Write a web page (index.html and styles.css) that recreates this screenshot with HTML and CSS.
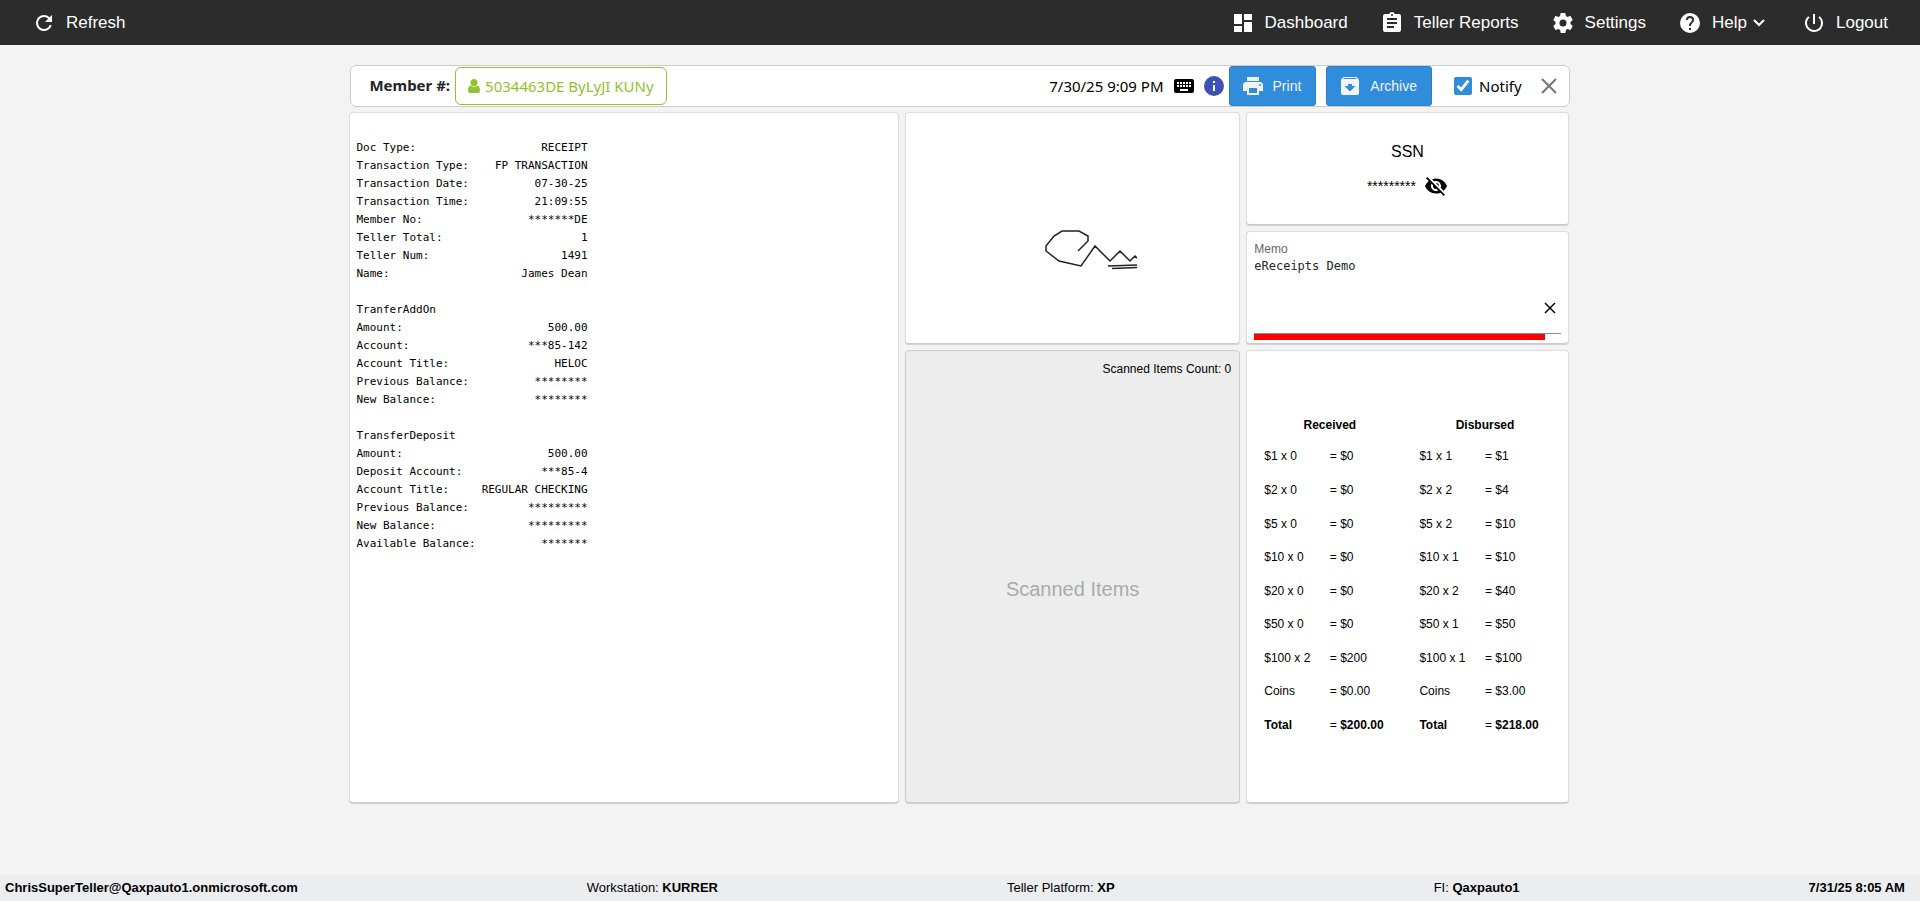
FILE: index.html
```html
<!DOCTYPE html>
<html lang="en">
<head>
  <meta charset="UTF-8">
  <title>Teller Receipt</title>
  <link rel="stylesheet" href="styles.css">
</head>
<body>

<header class="navbar">
  <a href="#" class="nav-link">
    <svg class="icon" viewBox="0 0 24 24"><path d="M17.65 6.35A7.96 7.96 0 0 0 12 4a8 8 0 1 0 7.73 10h-2.08A6 6 0 1 1 12 6c1.66 0 3.14.69 4.22 1.78L13 11h7V4z"/></svg>
    Refresh
  </a>
  <nav class="nav-right">
    <a href="#" class="nav-link">
      <svg class="icon" viewBox="0 0 24 24"><path d="M3 13h8V3H3v10zm0 8h8v-6H3v6zm10 0h8V11h-8v10zm0-18v6h8V3h-8z"/></svg>
      Dashboard
    </a>
    <a href="#" class="nav-link">
      <svg class="icon" viewBox="0 0 24 24"><path d="M19 3h-4.18C14.4 1.84 13.3 1 12 1s-2.4.84-2.82 2H5a2 2 0 0 0-2 2v14a2 2 0 0 0 2 2h14a2 2 0 0 0 2-2V5a2 2 0 0 0-2-2zm-7 0a1 1 0 1 1 0 2 1 1 0 0 1 0-2zm2 14H7v-2h7v2zm3-4H7v-2h10v2zm0-4H7V7h10v2z"/></svg>
      Teller Reports
    </a>
    <a href="#" class="nav-link">
      <svg class="icon" viewBox="0 0 24 24"><path d="M19.43 12.98c.04-.32.07-.64.07-.98s-.03-.66-.07-.98l2.11-1.65c.19-.15.24-.42.12-.64l-2-3.46c-.12-.22-.39-.3-.61-.22l-2.49 1c-.52-.4-1.08-.73-1.69-.98l-.38-2.65A.49.49 0 0 0 14 2h-4c-.25 0-.46.18-.49.42l-.38 2.65c-.61.25-1.17.59-1.69.98l-2.49-1c-.23-.09-.49 0-.61.22l-2 3.46c-.13.22-.07.49.12.64l2.11 1.65c-.04.32-.07.65-.07.98s.03.66.07.98l-2.11 1.65c-.19.15-.24.42-.12.64l2 3.46c.12.22.39.3.61.22l2.49-1c.52.4 1.08.73 1.69.98l.38 2.65c.03.24.24.42.49.42h4c.25 0 .46-.18.49-.42l.38-2.65c.61-.25 1.17-.59 1.69-.98l2.49 1c.23.09.49 0 .61-.22l2-3.46c.12-.22.07-.49-.12-.64l-2.11-1.65zM12 15.5a3.5 3.5 0 1 1 0-7 3.5 3.5 0 0 1 0 7z"/></svg>
      Settings
    </a>
    <a href="#" class="nav-link">
      <svg class="icon" viewBox="0 0 24 24"><path d="M12 2a10 10 0 1 0 0 20 10 10 0 0 0 0-20zm1 17h-2v-2h2v2zm2.07-7.75l-.9.92C13.45 12.9 13 13.5 13 15h-2v-.5c0-1.1.45-2.1 1.17-2.83l1.24-1.26A2 2 0 1 0 10 9H8a4 4 0 1 1 8 0c0 .88-.36 1.68-.93 2.25z"/></svg>
      <span class="with-caret">Help
        <svg class="caret" viewBox="0 0 14 10"><path d="M2 2l5 5 5-5"/></svg>
      </span>
    </a>
    <a href="#" class="nav-link">
      <svg class="icon" viewBox="0 0 24 24"><path d="M13 3h-2v10h2V3zm4.83 2.17l-1.42 1.42A6.92 6.92 0 0 1 19 12a7 7 0 1 1-11.42-5.41L6.17 5.17A8.96 8.96 0 0 0 3 12a9 9 0 1 0 14.83-6.83z"/></svg>
      Logout
    </a>
  </nav>
</header>

<main class="content">
  <div class="member-bar">
    <span class="member-label">Member #:</span>
    <button type="button" class="member-button">
      <svg class="user-icon" viewBox="0 0 12 14"><circle cx="6" cy="3.6" r="3.6"/><path d="M2.8 6.6C.8 7 0 9 0 11.4c0 1.6 1 2.6 2.4 2.6h7.2c1.4 0 2.4-1 2.4-2.6 0-2.4-.8-4.4-2.8-4.8a4.7 4.7 0 0 1-6.4 0z"/></svg>
      5034463DE ByLyJI KUNy
    </button>
    <div class="actions">
      <span class="receipt-date">7/30/25 9:09 PM</span>
      <svg class="icon" viewBox="0 0 24 24"><path d="M20 5H4a2 2 0 0 0-2 2v10a2 2 0 0 0 2 2h16a2 2 0 0 0 2-2V7a2 2 0 0 0-2-2zm-9 3h2v2h-2V8zm0 3h2v2h-2v-2zM8 8h2v2H8V8zm0 3h2v2H8v-2zm-1 2H5v-2h2v2zm0-3H5V8h2v2zm9 7H8v-2h8v2zm0-4h-2v-2h2v2zm0-3h-2V8h2v2zm3 3h-2v-2h2v2zm0-3h-2V8h2v2z"/></svg>
      <svg class="icon info-icon" viewBox="0 0 24 24"><path d="M12 2a10 10 0 1 0 0 20 10 10 0 0 0 0-20zm1 15h-2v-6h2v6zm0-8h-2V7h2v2z"/></svg>
      <button type="button" class="btn">
        <svg class="icon" viewBox="0 0 24 24"><path d="M19 8H5c-1.66 0-3 1.34-3 3v6h4v4h12v-4h4v-6c0-1.66-1.34-3-3-3zm-3 11H8v-5h8v5zm3-7a1 1 0 1 1 0-2 1 1 0 0 1 0 2zm-1-9H6v4h12V3z"/></svg>
        Print
      </button>
      <button type="button" class="btn">
        <svg class="icon" viewBox="0 0 24 24"><path d="M20.54 5.23l-1.39-1.68A1.45 1.45 0 0 0 18 3H6c-.47 0-.88.21-1.16.55L3.46 5.23C3.17 5.57 3 6.02 3 6.5V19a2 2 0 0 0 2 2h14a2 2 0 0 0 2-2V6.5c0-.48-.17-.93-.46-1.27zM12 17.5L6.5 12H10v-2h4v2h3.5L12 17.5zM5.12 5l.81-1h12l.94 1H5.12z"/></svg>
        Archive
      </button>
      <label class="notify"><input type="checkbox" checked>Notify</label>
      <button type="button" class="close-button" aria-label="Close">
        <svg class="close-icon" viewBox="0 0 16 16"><path d="M1 1l14 14M15 1L1 15"/></svg>
      </button>
    </div>
  </div>

  <div class="panels">
    <section class="panel receipt">
      <table class="receipt-table">
        <tr><td>Doc Type:</td><td>RECEIPT</td></tr>
        <tr><td>Transaction Type:</td><td>FP TRANSACTION</td></tr>
        <tr><td>Transaction Date:</td><td>07-30-25</td></tr>
        <tr><td>Transaction Time:</td><td>21:09:55</td></tr>
        <tr><td>Member No:</td><td>*******DE</td></tr>
        <tr><td>Teller Total:</td><td>1</td></tr>
        <tr><td>Teller Num:</td><td>1491</td></tr>
        <tr><td>Name:</td><td>James Dean</td></tr>
        <tr><td colspan="2"></td></tr>
        <tr><td colspan="2">TranferAddOn</td></tr>
        <tr><td>Amount:</td><td>500.00</td></tr>
        <tr><td>Account:</td><td>***85-142</td></tr>
        <tr><td>Account Title:</td><td>HELOC</td></tr>
        <tr><td>Previous Balance:</td><td>********</td></tr>
        <tr><td>New Balance:</td><td>********</td></tr>
        <tr><td colspan="2"></td></tr>
        <tr><td colspan="2">TransferDeposit</td></tr>
        <tr><td>Amount:</td><td>500.00</td></tr>
        <tr><td>Deposit Account:</td><td>***85-4</td></tr>
        <tr><td>Account Title:</td><td>REGULAR CHECKING</td></tr>
        <tr><td>Previous Balance:</td><td>*********</td></tr>
        <tr><td>New Balance:</td><td>*********</td></tr>
        <tr><td>Available Balance:</td><td>*******</td></tr>
      </table>
    </section>

    <section class="panel signature">
      <svg class="signature-drawing" viewBox="0 0 128 90">
        <path d="M69 68L79 58V53L70 48H53L45 53 37 63V68L50 78 72 83 86 63 101 78 111 68 121 78 126 73 129 76"/>
        <path d="M99 83L128 82M103 85.5L128 84.5"/>
      </svg>
    </section>

    <section class="panel ssn">
      <div class="ssn-title">SSN</div>
      <div class="ssn-value">
        <span>*********</span>
        <button type="button" class="plain-button" aria-label="Show SSN">
          <svg class="icon" viewBox="0 0 24 24"><path d="M12 7a5 5 0 0 1 4.64 6.83l2.92 2.92c1.51-1.26 2.7-2.89 3.43-4.75C21.27 7.61 17 4.5 12 4.5c-1.4 0-2.74.25-3.98.7l2.16 2.16C10.74 7.13 11.35 7 12 7zM2 4.27l2.28 2.28.46.46A11.8 11.8 0 0 0 1 12c1.73 4.39 6 7.5 11 7.5 1.55 0 3.03-.3 4.38-.84l.42.42L19.73 22 21 20.73 3.27 3 2 4.27zM7.53 9.8l1.55 1.55c-.05.21-.08.43-.08.65a3 3 0 0 0 3 3c.22 0 .44-.03.65-.08l1.55 1.55A5 5 0 0 1 7.53 9.8zm4.31-.78l3.15 3.15.02-.16a3 3 0 0 0-3-3l-.17.01z"/></svg>
        </button>
      </div>
    </section>

    <section class="panel memo">
      <label for="memo">Memo</label>
      <textarea id="memo">eReceipts Demo</textarea>
      <button type="button" class="clear-button" aria-label="Clear memo">
        <svg class="clear-icon" viewBox="0 0 10 10"><path d="M0 0l10 10M10 0L0 10"/></svg>
      </button>
      <div class="memo-line"><div class="memo-progress" style="width: 95%"></div></div>
    </section>

    <section class="panel scanned">
      <div class="scanned-count">Scanned Items Count: 0</div>
      <div class="scanned-empty">Scanned Items</div>
    </section>

    <section class="panel cash">
      <table class="cash-table">
        <thead>
          <tr><th colspan="2">Received</th><th colspan="2">Disbursed</th></tr>
        </thead>
        <tbody>
          <tr><td>$1 x 0</td><td>= $0</td><td>$1 x 1</td><td>= $1</td></tr>
          <tr><td>$2 x 0</td><td>= $0</td><td>$2 x 2</td><td>= $4</td></tr>
          <tr><td>$5 x 0</td><td>= $0</td><td>$5 x 2</td><td>= $10</td></tr>
          <tr><td>$10 x 0</td><td>= $0</td><td>$10 x 1</td><td>= $10</td></tr>
          <tr><td>$20 x 0</td><td>= $0</td><td>$20 x 2</td><td>= $40</td></tr>
          <tr><td>$50 x 0</td><td>= $0</td><td>$50 x 1</td><td>= $50</td></tr>
          <tr><td>$100 x 2</td><td>= $200</td><td>$100 x 1</td><td>= $100</td></tr>
          <tr><td>Coins</td><td>= $0.00</td><td>Coins</td><td>= $3.00</td></tr>
          <tr><td><b>Total</b></td><td>= <b>$200.00</b></td><td><b>Total</b></td><td>= <b>$218.00</b></td></tr>
        </tbody>
      </table>
    </section>
  </div>
</main>

<footer class="status-bar">
  <b>ChrisSuperTeller@Qaxpauto1.onmicrosoft.com</b>
  <span>Workstation: <b>KURRER</b></span>
  <span class="platform">Teller Platform: <b>XP</b></span>
  <span>FI: <b>Qaxpauto1</b></span>
  <b>7/31/25 8:05 AM</b>
</footer>

</body>
</html>
```
FILE: styles.css
```css
* {
  box-sizing: border-box;
}

body {
  margin: 0;
  min-height: 100vh;
  display: flex;
  flex-direction: column;
  background: #f3f3f3;
  color: #000;
  font-family: "Liberation Sans", Arial, sans-serif;
  font-size: 12px;
}

button {
  font-family: inherit;
  cursor: pointer;
}

.icon {
  width: 24px;
  height: 24px;
  flex: none;
  fill: currentColor;
}

/* Top navigation */
.navbar {
  display: flex;
  justify-content: space-between;
  align-items: center;
  height: 45px;
  padding: 0 32px;
  background: #2c2c2c;
}

.nav-right {
  display: flex;
  gap: 32px;
}

.nav-link {
  display: flex;
  align-items: center;
  gap: 10px;
  color: #fff;
  font-size: 17px;
  text-decoration: none;
}

.with-caret {
  display: flex;
  align-items: center;
  gap: 5px;
  padding-right: 4px;
}

.caret {
  width: 14px;
  height: 10px;
  fill: none;
  stroke: #fff;
  stroke-width: 2;
}

.content {
  flex: 1;
  display: flex;
  flex-direction: column;
  gap: 5px;
  width: 63.5%;
  min-width: 1060px;
  margin: 0 auto;
  padding: 20px 0 72px;
}

/* Member bar */
.member-bar {
  display: flex;
  align-items: center;
  height: 42px;
  padding: 0 12px 0 18px;
  background: #fff;
  border: 1px solid #ccc;
  border-radius: 6px;
  font-family: "Noto Sans", sans-serif;
  font-size: 15px;
}

.member-label {
  padding-bottom: 2px;
  font-weight: bold;
  color: #212529;
}

.member-button {
  display: flex;
  align-items: center;
  gap: 5px;
  height: 38px;
  margin-left: 5px;
  padding: 0 12px;
  background: #fff;
  border: 1px solid #93c22f;
  border-radius: 6px;
  color: #93c22f;
  font-size: 15px;
}

.user-icon {
  width: 12px;
  height: 14px;
  fill: #93c22f;
}

.actions {
  display: flex;
  align-items: center;
  margin-left: auto;
}

.receipt-date {
  margin-right: 8px;
}

.info-icon {
  margin: 0 3px 0 6px;
  fill: #3f51b5;
}

.btn {
  display: flex;
  align-items: center;
  gap: 8px;
  height: 40px;
  margin-right: 10px;
  padding: 0 14px 0 11px;
  background: #308ddc;
  border: 1px solid #2a80c9;
  border-radius: 3px;
  color: #f3f3f3;
  font-family: "Liberation Sans", Arial, sans-serif;
  font-size: 14px;
}

.notify {
  display: flex;
  align-items: center;
  gap: 7px;
  margin: 0 19px 0 12px;
}

.notify input {
  width: 18px;
  height: 18px;
  margin: 0;
  accent-color: #308ddc;
}

.close-button,
.plain-button,
.clear-button {
  display: flex;
  padding: 0;
  background: none;
  border: none;
}

.close-icon {
  width: 16px;
  height: 16px;
  stroke: #757575;
  stroke-width: 2;
}

/* Panels */
.panels {
  flex: 1;
  display: grid;
  grid-template-columns: 549fr 335fr 322fr;
  grid-template-rows: 1fr 1fr 4fr;
  gap: 6px;
  margin: 0 1px 0 -1px;
}

.panel {
  background: #fff;
  border: 1px solid #ddd;
  border-bottom-color: #ccc;
  border-radius: 4px;
  box-shadow: 0 1px 1px rgba(0, 0, 0, 0.15);
}

.receipt {
  grid-row: 1 / 4;
  padding: 26px 6px;
}

.receipt-table {
  border-collapse: collapse;
  font-family: "DejaVu Sans Mono", monospace;
  font-size: 11px;
  line-height: 18px;
}

.receipt-table td {
  height: 18px;
  padding: 0;
}

.receipt-table td + td {
  padding-left: 6px;
  text-align: right;
}

.signature {
  grid-row: 1 / 3;
  grid-column: 2;
  display: flex;
  justify-content: center;
  align-items: center;
}

.signature-drawing {
  width: 128px;
  height: 90px;
  fill: none;
  stroke: #222;
  stroke-width: 1.5;
}

.ssn {
  grid-column: 3;
  display: flex;
  flex-direction: column;
  align-items: center;
  justify-content: center;
  gap: 13px;
  padding-top: 4px;
}

.ssn-title {
  font-size: 16px;
}

.ssn-value {
  display: flex;
  align-items: center;
  gap: 8px;
  font-size: 14px;
}

.memo {
  grid-column: 3;
  display: flex;
  flex-direction: column;
  padding: 10px 7px 3px;
}

.memo label {
  color: #666;
}

.memo textarea {
  flex: 1;
  min-height: 40px;
  padding: 3px 0;
  border: none;
  outline: none;
  resize: none;
  color: #212529;
  font-family: "DejaVu Sans Mono", monospace;
  font-size: 12px;
}

.clear-button {
  align-self: flex-end;
  margin: 0 6px 20px 0;
}

.clear-icon {
  width: 10px;
  height: 10px;
  overflow: visible;
  stroke: #000;
  stroke-width: 1.5;
}

.memo-line {
  border-top: 1px solid #8c8c8c;
}

.memo-progress {
  height: 6px;
  background: #f00;
}

.scanned {
  display: flex;
  flex-direction: column;
  padding: 11px 8px 0;
  background: #ededed;
  border-color: #ccc;
}

.scanned-count {
  text-align: right;
}

.scanned-empty {
  flex: 1;
  display: flex;
  justify-content: center;
  align-items: center;
  color: #aaa;
  font-size: 20px;
}

.cash {
  display: flex;
  align-items: center;
  padding: 0 5px 2px;
}

.cash-table {
  width: 100%;
  height: 332px;
  table-layout: fixed;
  border-collapse: collapse;
}

.cash-table th {
  height: 30px;
  padding: 0;
}

.cash-table td {
  padding: 0;
}

.cash-table td:nth-child(odd) {
  padding-left: 12px;
}

/* Footer */
.status-bar {
  display: flex;
  justify-content: space-between;
  align-items: center;
  height: 26px;
  padding: 0 15px 2px 5px;
  background: #ebedef;
  font-size: 13px;
}

.platform {
  padding-right: 30px;
}
```
